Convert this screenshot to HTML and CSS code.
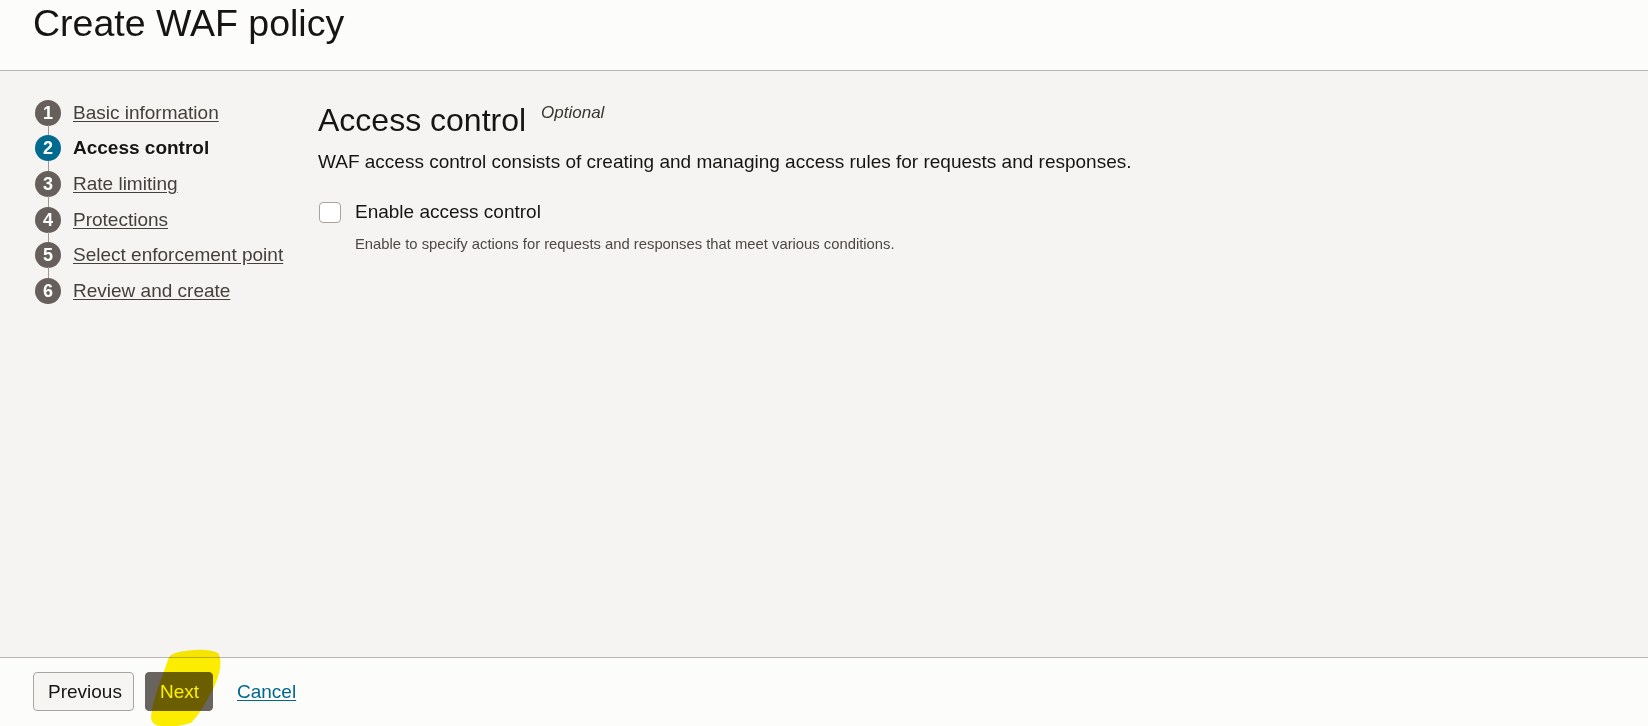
FILE: index.html
```html
<!DOCTYPE html>
<html lang="en">
<head>
<meta charset="utf-8">
<title>Create WAF policy</title>
<link rel="stylesheet" href="styles.css">
</head>
<body>
<header class="page-header">
  <h1 class="page-title">Create WAF policy</h1>
</header>
<div class="wizard">
  <nav class="steps">
    <ol class="step-list">
      <li class="step"><span class="step-num">1</span><a class="step-link" href="#">Basic information</a></li>
      <li class="step is-active"><span class="step-num">2</span><span class="step-current">Access control</span></li>
      <li class="step"><span class="step-num">3</span><a class="step-link" href="#">Rate limiting</a></li>
      <li class="step"><span class="step-num">4</span><a class="step-link" href="#">Protections</a></li>
      <li class="step"><span class="step-num">5</span><a class="step-link" href="#">Select enforcement point</a></li>
      <li class="step"><span class="step-num">6</span><a class="step-link" href="#">Review and create</a></li>
    </ol>
  </nav>
  <section class="step-content">
    <h2 class="section-title">Access control<span class="optional">Optional</span></h2>
    <p class="section-desc">WAF access control consists of creating and managing access rules for requests and responses.</p>
    <label class="check-row"><span class="checkbox"></span><span class="check-label">Enable access control</span></label>
    <p class="check-help">Enable to specify actions for requests and responses that meet various conditions.</p>
  </section>
</div>
<footer class="wizard-footer">
  <button class="btn btn-secondary" type="button">Previous</button>
  <button class="btn btn-primary" type="button">Next</button>
  <a class="link-cancel" href="#">Cancel</a>
  <svg class="highlight" width="90" height="82" viewBox="0 0 90 82" aria-hidden="true">
    <path d="M76 9 C70 5 58 5 44 7 C35 8 30 10 29 14 C26 24 21 36 17 48 C14 58 12 67 12 72 C13 77 16 78 21 78 C30 79 40 78 49 75 C54 70 58 64 61 59 C65 52 70 44 73 36 C77 26 79 16 76 9 Z" fill="#fff000" stroke="#fff000" stroke-width="4" stroke-linejoin="round"/>
  </svg>
</footer>
</body>
</html>
```

FILE: styles.css
```css
* { box-sizing: border-box; }

html, body {
  margin: 0;
  padding: 0;
}

body {
  height: 726px;
  display: flex;
  flex-direction: column;
  font-family: "Liberation Sans", Arial, sans-serif;
  color: #161513;
  background: #f5f4f2;
  overflow: hidden;
}

.page-header {
  height: 71px;
  flex: none;
  background: #fcfcfb;
  border-bottom: 1px solid #bab6b1;
  padding: 2px 0 0 33px;
}

.page-title {
  margin: 0;
  font-size: 37.5px;
  line-height: 42px;
  font-weight: normal;
  color: #161513;
}

.wizard {
  flex: 1;
  display: flex;
  background: #f5f4f2;
}

.steps {
  width: 318px;
  flex: none;
  padding: 24px 0 0 35px;
}

.step-list {
  list-style: none;
  margin: 0;
  padding: 0;
}

.step {
  position: relative;
  height: 35.6px;
  display: flex;
  align-items: center;
  gap: 12px;
  font-size: 19px;
}

.step:not(:last-child)::after {
  content: "";
  position: absolute;
  left: 12.5px;
  top: 30px;
  width: 1px;
  height: 12px;
  background: #9e9892;
}

.step-num {
  width: 26px;
  height: 26px;
  flex: none;
  border-radius: 50%;
  background: #665f5b;
  color: #ffffff;
  font-size: 18px;
  font-weight: bold;
  display: flex;
  align-items: center;
  justify-content: center;
  line-height: 1;
}

.is-active .step-num {
  background: #006b8f;
}

.step-link {
  color: #45403c;
  text-decoration: underline;
  text-underline-offset: 2px;
}

.step-current {
  font-weight: bold;
  color: #161513;
}

.step-content {
  flex: 1;
  padding: 30px 0 0 0;
}

.section-title {
  margin: 0;
  font-size: 32px;
  line-height: 38px;
  font-weight: normal;
  color: #161513;
}

.optional {
  font-size: 17px;
  font-style: italic;
  line-height: 0;
  color: #3a3631;
  margin-left: 15px;
  vertical-align: 13px;
}

.section-desc {
  margin: 12px 0 0 0;
  font-size: 19px;
  line-height: 22px;
  color: #161513;
}

.check-row {
  margin-top: 28px;
  display: flex;
  align-items: center;
  gap: 14px;
  height: 22px;
  padding-left: 1px;
}

.checkbox {
  width: 22px;
  height: 21px;
  flex: none;
  background: #ffffff;
  border: 1px solid #a9a39e;
  border-radius: 4px;
}

.check-label {
  font-size: 19px;
  line-height: 22px;
  color: #161513;
}

.check-help {
  margin: 12px 0 0 37px;
  font-size: 14.8px;
  line-height: 18px;
  color: #4d4844;
}

.wizard-footer {
  position: relative;
  flex: none;
  height: 69px;
  background: #fcfcfb;
  border-top: 1px solid #bab6b1;
  display: flex;
  align-items: flex-start;
  padding: 14px 0 0 33px;
}

.btn {
  height: 39px;
  padding: 0 14px;
  font-family: "Liberation Sans", Arial, sans-serif;
  font-size: 19px;
  border-radius: 4px;
  cursor: pointer;
}

.btn-secondary {
  width: 101px;
  background: #f6f5f4;
  border: 1px solid #a9a39e;
  color: #161513;
}

.btn-primary {
  width: 68px;
  margin-left: 11px;
  background: #6a6461;
  border: 1px solid #6a6461;
  color: #ffffff;
}

.link-cancel {
  margin-left: 24px;
  font-size: 19px;
  line-height: 39px;
  color: #00688c;
  text-decoration: underline;
  text-underline-offset: 2px;
}

.highlight {
  position: absolute;
  left: 141px;
  top: -12px;
  mix-blend-mode: multiply;
  pointer-events: none;
}
```
